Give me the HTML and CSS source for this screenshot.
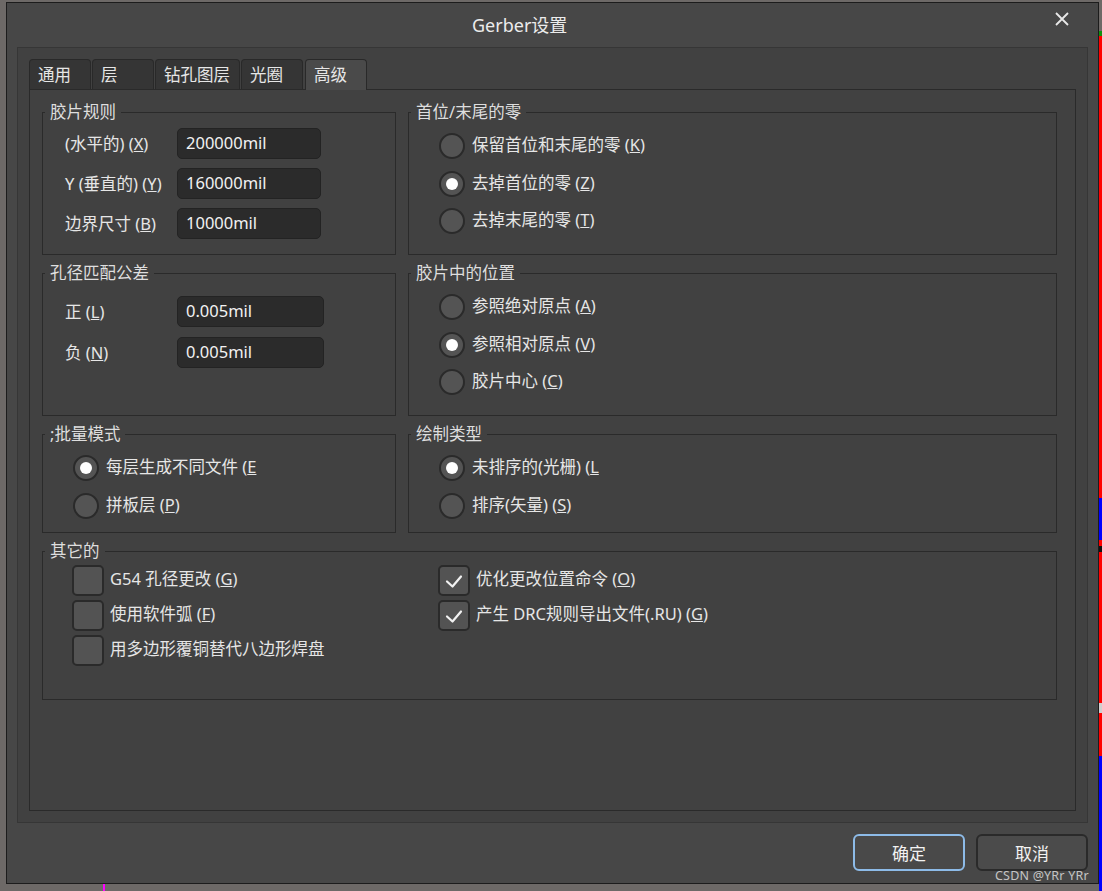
FILE: index.html
```html
<!DOCTYPE html>
<html lang="zh-CN">
<head>
<meta charset="utf-8">
<title>Gerber设置</title>
<link rel="stylesheet" href="styles.css">
</head>
<body>
<div class="desktop">
  <div class="dialog">
    <div class="titlebar">
      <span class="title">Gerber设置</span>
      <svg class="close" width="14" height="14" viewBox="0 0 14 14"><path d="M1 1 L13 13 M13 1 L1 13" stroke="#e8e8e8" stroke-width="1.8" fill="none"/></svg>
    </div>
    <div class="panel">
      <div class="tabs">
        <div class="tab w63">通用</div>
        <div class="tab w63">层</div>
        <div class="tab w86">钻孔图层</div>
        <div class="tab w63 gap2">光圈</div>
        <div class="tab w62 active">高级</div>
      </div>
      <div class="content">
        <section class="group">
          <div class="legend"><span>胶片规则</span></div>
          <div class="fields fields-film">
            <div class="flabel">(水平的) (<u>X</u>)</div><div class="input">200000mil</div>
            <div class="flabel">Y (垂直的) (<u>Y</u>)</div><div class="input">160000mil</div>
            <div class="flabel">边界尺寸 (<u>B</u>)</div><div class="input">10000mil</div>
          </div>
        </section>
        <section class="group">
          <div class="legend"><span>首位/末尾的零</span></div>
          <div class="radios">
            <div class="ritem"><span class="radio"></span><span>保留首位和末尾的零 (<u>K</u>)</span></div>
            <div class="ritem"><span class="radio on"></span><span>去掉首位的零 (<u>Z</u>)</span></div>
            <div class="ritem"><span class="radio"></span><span>去掉末尾的零 (<u>T</u>)</span></div>
          </div>
        </section>
        <section class="group">
          <div class="legend"><span>孔径匹配公差</span></div>
          <div class="fields fields-tol">
            <div class="flabel">正 (<u>L</u>)</div><div class="input">0.005mil</div>
            <div class="flabel">负 (<u>N</u>)</div><div class="input">0.005mil</div>
          </div>
        </section>
        <section class="group">
          <div class="legend"><span>胶片中的位置</span></div>
          <div class="radios">
            <div class="ritem"><span class="radio"></span><span>参照绝对原点 (<u>A</u>)</span></div>
            <div class="ritem"><span class="radio on"></span><span>参照相对原点 (<u>V</u>)</span></div>
            <div class="ritem"><span class="radio"></span><span>胶片中心 (<u>C</u>)</span></div>
          </div>
        </section>
        <section class="group">
          <div class="legend"><span>;批量模式</span></div>
          <div class="radios">
            <div class="ritem"><span class="radio on"></span><span>每层生成不同文件 (<u>E</u></span></div>
            <div class="ritem"><span class="radio"></span><span>拼板层 (<u>P</u>)</span></div>
          </div>
        </section>
        <section class="group">
          <div class="legend"><span>绘制类型</span></div>
          <div class="radios">
            <div class="ritem"><span class="radio on"></span><span>未排序的(光栅) (<u>L</u></span></div>
            <div class="ritem"><span class="radio"></span><span>排序(矢量) (<u>S</u>)</span></div>
          </div>
        </section>
        <section class="group wide">
          <div class="legend"><span>其它的</span></div>
          <div class="checks">
            <div class="citem"><span class="cbox"></span><span>G54 孔径更改 (<u>G</u>)</span></div>
            <div class="citem"><span class="cbox"><svg width="28" height="27" viewBox="0 0 28 27"><path d="M7 14.5 L12.5 19.5 L21 9.5" stroke="#f2f2f2" stroke-width="2.2" fill="none" stroke-linecap="round" stroke-linejoin="round"/></svg></span><span>优化更改位置命令 (<u>O</u>)</span></div>
            <div class="citem"><span class="cbox"></span><span>使用软件弧 (<u>F</u>)</span></div>
            <div class="citem"><span class="cbox"><svg width="28" height="27" viewBox="0 0 28 27"><path d="M7 14.5 L12.5 19.5 L21 9.5" stroke="#f2f2f2" stroke-width="2.2" fill="none" stroke-linecap="round" stroke-linejoin="round"/></svg></span><span>产生 DRC规则导出文件(.RU) (<u>G</u>)</span></div>
            <div class="citem"><span class="cbox"></span><span>用多边形覆铜替代八边形焊盘</span></div>
          </div>
        </section>
      </div>
    </div>
    <div class="buttons">
      <div class="btn primary">确定</div>
      <div class="btn">取消</div>
    </div>
  </div>
  <div class="strip"></div>
</div>
<div class="watermark">CSDN @YRr YRr</div>
<div class="pin"></div>
</body>
</html>
```
FILE: styles.css
```css
html, body {
  margin: 0;
  padding: 0;
}
body {
  width: 1102px;
  height: 891px;
  overflow: hidden;
  background: #6d6967;
  font-family: "Noto Sans", "Noto Sans CJK SC", sans-serif;
  color: #e6e6e6;
  position: relative;
}
.desktop {
  display: flex;
  align-items: flex-start;
}
.dialog {
  margin: 2px 0 0 6px;
  width: 1093px;
  height: 882px;
  flex: none;
  box-sizing: border-box;
  border: 1px solid #1c1c1c;
  background: #474747;
  display: flex;
  flex-direction: column;
}
.strip {
  width: 3px;
  flex: none;
  height: 891px;
  background: linear-gradient(to bottom,
    #6d6967 0, #6d6967 31px,
    #109010 31px, #109010 36px,
    #ff0000 36px, #ff0000 498px,
    #0000ff 498px, #0000ff 540px,
    #ff0000 540px, #ff0000 546px,
    #111 546px, #111 552px,
    #ff0000 552px, #ff0000 703px,
    #cfcfcf 703px, #cfcfcf 713px,
    #ff0000 713px, #ff0000 756px,
    #0000ff 756px, #0000ff 891px);
}
.titlebar {
  height: 44px;
  flex: none;
  display: flex;
  align-items: center;
}
.title {
  margin-left: 465px;
  font-size: 18px;
  line-height: 24px;
  color: #ececec;
}
.close {
  margin-left: auto;
  margin-right: 29px;
  margin-top: -12px;
}
.panel {
  margin: 0 10px;
  height: 776px;
  flex: none;
  box-sizing: border-box;
  border: 1px solid #363636;
  background: #414141;
  padding: 11px;
}
.tabs {
  display: flex;
  height: 30px;
  align-items: flex-end;
}
.tab {
  height: 30px;
  box-sizing: border-box;
  border: 1px solid #292929;
  border-bottom: none;
  border-radius: 4px 4px 0 0;
  background: #353535;
  padding-left: 8px;
  font-size: 16.5px;
  line-height: 29px;
  color: #e6e6e6;
  margin-right: 1px;
  flex: none;
}
.w63 { width: 62px; }
.w86 { width: 85px; }
.w62 { width: 62px; }
.gap2 { margin-right: 2px; }
.tab.active {
  background: #4a4a4a;
  height: 31px;
  margin-bottom: -1px;
  position: relative;
  z-index: 1;
}
.content {
  height: 722px;
  box-sizing: border-box;
  border: 1px solid #2a2a2a;
  background: #414141;
  padding: 22px 18px 0 12px;
  display: grid;
  grid-template-columns: 354px 649px;
  grid-template-rows: 143px 143px 99px 149px;
  column-gap: 12px;
  row-gap: 18px;
  align-content: start;
}
.group {
  border: 1px solid #2a2a2a;
  box-sizing: border-box;
}
.group.wide {
  grid-column: 1 / 3;
}
.legend {
  height: 20px;
  margin-top: -11px;
  padding-left: 2px;
  line-height: 20px;
  font-size: 16.5px;
}
.legend span {
  background: #414141;
  padding: 0 5px;
  color: #dedede;
}
.fields {
  display: grid;
  grid-template-columns: 112px 144px;
  grid-auto-rows: 31px;
  row-gap: 9px;
  align-items: center;
  padding-left: 22px;
  margin-top: 6px;
}
.fields-tol {
  grid-template-columns: 112px 147px;
  row-gap: 10px;
  margin-top: 13px;
}
.flabel {
  font-size: 16.5px;
  line-height: 20px;
  color: #e6e6e6;
}
.input {
  height: 31px;
  box-sizing: border-box;
  border: 1px solid #232323;
  border-radius: 5px;
  background: #2b2b2b;
  padding-left: 8px;
  font-size: 16.5px;
  line-height: 27px;
  color: #f2f2f2;
}
.radios {
  display: flex;
  flex-direction: column;
  gap: 11.5px;
  padding-left: 30px;
  margin-top: 11px;
}
.ritem {
  display: flex;
  align-items: center;
  gap: 7px;
  height: 26px;
  font-size: 16.5px;
  line-height: 20px;
  color: #e6e6e6;
}
.ritem > span:last-child,
.citem > span:last-child {
  margin-top: -2px;
}
.radio {
  width: 26px;
  height: 26px;
  box-sizing: border-box;
  border-radius: 50%;
  border: 2px solid #2a2a2a;
  background: #545454;
  display: flex;
  align-items: center;
  justify-content: center;
  flex: none;
}
.radio.on::after {
  content: "";
  width: 12px;
  height: 12px;
  border-radius: 50%;
  background: #ffffff;
}
.checks {
  display: grid;
  grid-template-columns: 366px auto;
  row-gap: 4px;
  padding-left: 29px;
  margin-top: 4px;
  justify-content: start;
}
.citem {
  display: flex;
  align-items: center;
  gap: 6px;
  height: 31px;
  font-size: 16.5px;
  line-height: 20px;
  color: #e6e6e6;
}
.citem > span:last-child {
  margin-top: -3px;
}
.cbox {
  width: 32px;
  height: 31px;
  box-sizing: border-box;
  border: 2px solid #2a2a2a;
  border-radius: 5px;
  background: #535353;
  flex: none;
  display: flex;
}
.buttons {
  display: flex;
  justify-content: flex-end;
  gap: 11px;
  padding: 11px 10px 0 0;
}
.btn {
  width: 112px;
  height: 37px;
  box-sizing: border-box;
  border: 2px solid #2a2a2a;
  border-radius: 6px;
  background: #4b4b4b;
  display: flex;
  align-items: center;
  justify-content: center;
  font-size: 17px;
  color: #f2f2f2;
}
.btn.primary {
  border-color: #8dbbe8;
  background: #494949;
}
.watermark {
  position: absolute;
  left: 995px;
  top: 868px;
  font-size: 12.5px;
  line-height: 16px;
  color: #c4c4c4;
  letter-spacing: 0.2px;
}
.pin {
  position: absolute;
  left: 103px;
  top: 884px;
  width: 2px;
  height: 7px;
  background: #ff00ff;
}
```
